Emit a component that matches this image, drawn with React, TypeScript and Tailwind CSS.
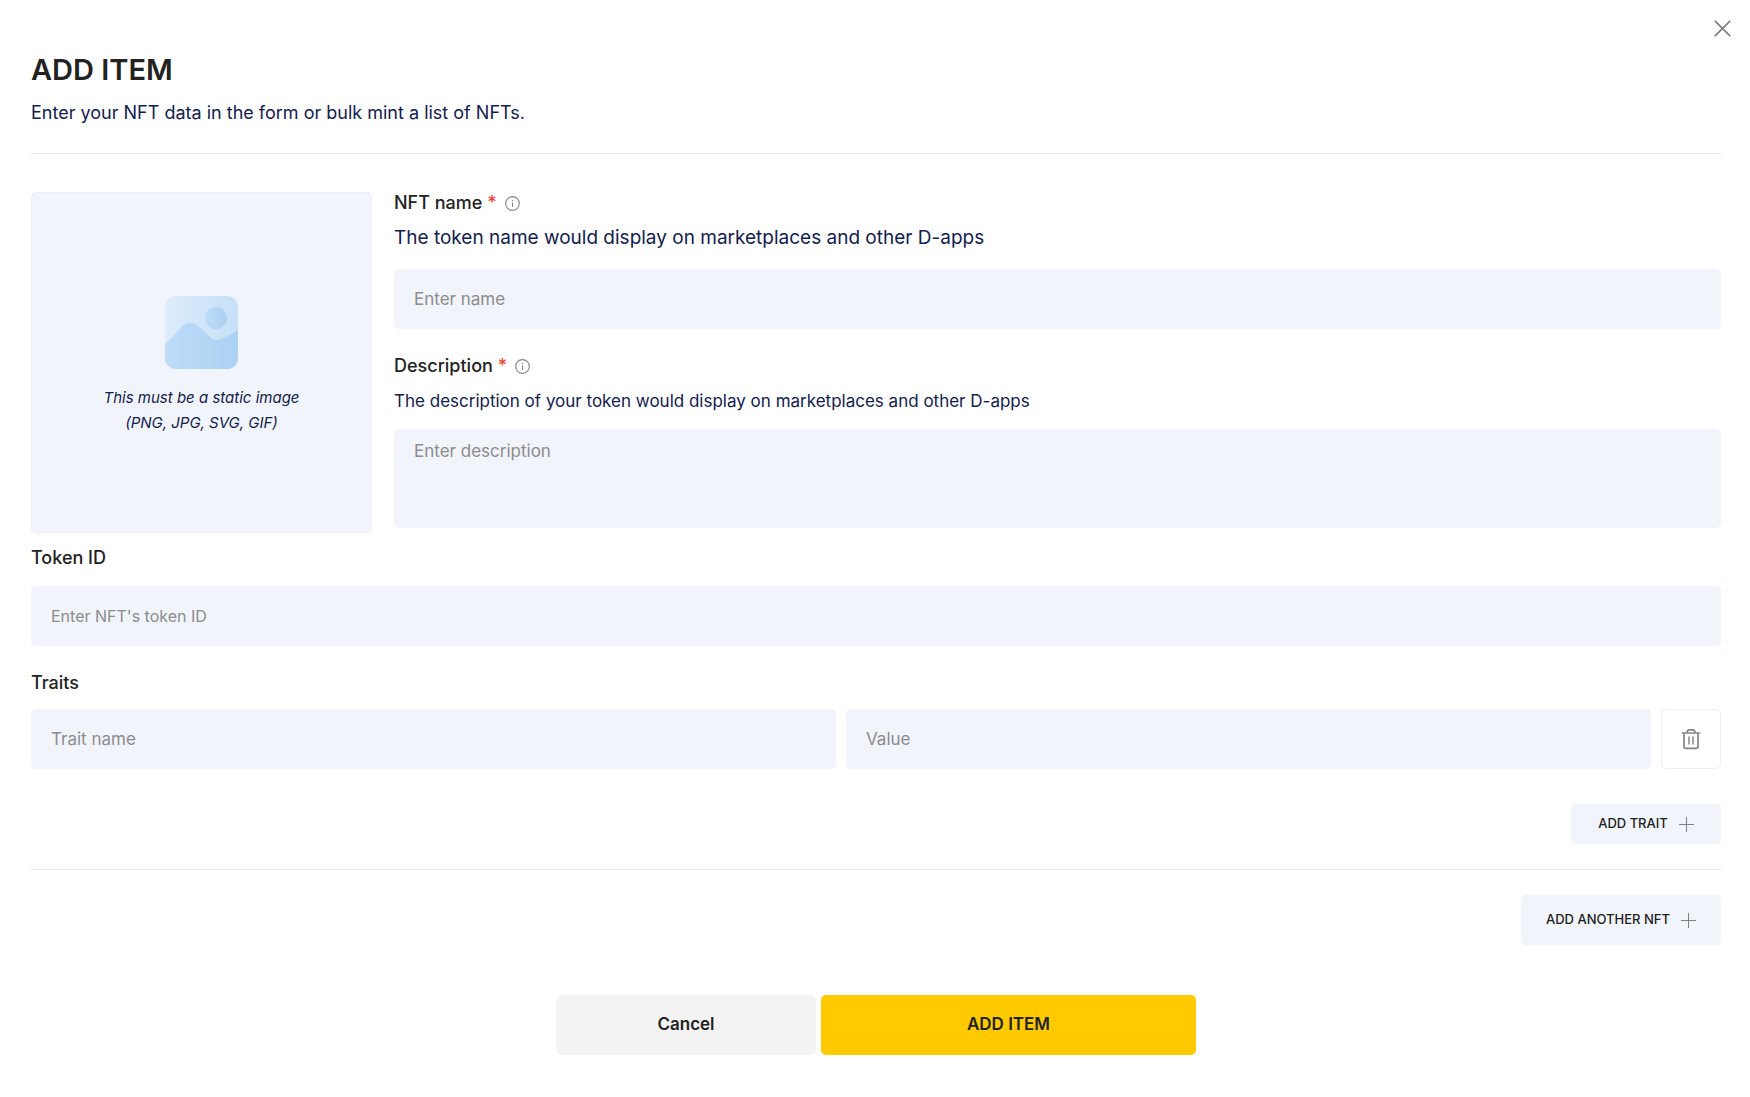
import type { ReactNode } from "react";

const field =
  "block w-full min-w-0 rounded-[5px] bg-[#f1f4fb] px-5 text-[17px] text-[#222] placeholder:text-[#8c8c8c] outline-none focus:ring-1 focus:ring-[#b9cdf0]";
const label = "text-[18px] leading-[22px] font-medium text-[#222]";

function InfoIcon() {
  return (
    <svg viewBox="0 0 16 16" className="ml-2 size-[15px]" fill="none" stroke="#85858c" aria-hidden="true">
      <circle cx="8" cy="8" r="7.3" strokeWidth="1.2" />
      <path d="M8 7v4.7" strokeWidth="1.2" />
      <path d="M8 4.3v1.3" strokeWidth="1.4" />
    </svg>
  );
}

function PlusIcon() {
  return (
    <svg viewBox="0 0 15 15" className="size-[15px]" stroke="#808080" aria-hidden="true">
      <path d="M0 7.5h15M7.5 0v15" />
    </svg>
  );
}

function TrashIcon() {
  return (
    <svg viewBox="0 0 20 22" className="h-[22px] w-5" fill="none" stroke="#858585" aria-hidden="true">
      <path d="M1.4 5h17.2" strokeWidth="1.7" strokeLinecap="round" />
      <path d="M6 4.800C6.200 2.600 6.800 1.800 8.200 1.800h3.600c1.400 0 2 .8 2.200 3" strokeWidth="1.7" />
      <path d="M3 5v13.500c0 1.300.6 1.900 1.900 1.900h10.200c1.300 0 1.900-.6 1.900-1.900V5" strokeWidth="1.7" />
      <path d="M8 8.500v8M12 8.500v8" strokeWidth="1.500" />
    </svg>
  );
}

function PictureIcon() {
  return (
    <svg viewBox="0 0 73 73" className="size-[73px]" aria-hidden="true">
      <defs>
        <linearGradient id="sky" x1="0" x2="1" y1="0" y2="0">
          <stop offset="0" stopColor="#ddecfa" />
          <stop offset="1" stopColor="#c6e0f8" />
        </linearGradient>
        <linearGradient id="hill" x1="0" x2="1" y1="0" y2="0">
          <stop offset="0" stopColor="#bcdcf8" />
          <stop offset="1" stopColor="#add1f2" />
        </linearGradient>
        <clipPath id="frame">
          <rect width="73" height="73" rx="11" />
        </clipPath>
      </defs>
      <g clipPath="url(#frame)">
        <rect width="73" height="73" fill="url(#sky)" />
        <circle cx="51" cy="22" r="11" fill="url(#hill)" />
        <path
          d="M0 49 L15 32.500 Q25 21.500 35.500 31.500 L43 39.500 Q49.500 46 57 42.500 L73 34.500 V73 H0Z"
          fill="url(#hill)"
        />
      </g>
    </svg>
  );
}

function RequiredLabel({ htmlFor, children }: { htmlFor: string; children: ReactNode }) {
  return (
    <div className="flex items-center">
      <label htmlFor={htmlFor} className={label}>
        {children} <span className="text-[#f04438]">*</span>
      </label>
      <InfoIcon />
    </div>
  );
}

export default function App() {
  return (
    <main className="min-h-screen bg-white pb-8 font-['Inter',sans-serif]">
      <div className="flex justify-end pt-5 pr-[19px]">
        <button type="button" aria-label="Close" className="h-[17px]">
          <svg viewBox="0 0 17 17" className="size-[17px]" stroke="#808080" strokeWidth="1.700" aria-hidden="true">
            <path d="M.8.8l15.400 15.400M16.200.8L.8 16.200" />
          </svg>
        </button>
      </div>
      <form className="pt-3 pr-[29px] pl-[31px]" onSubmit={(e) => e.preventDefault()}>
        <header className="border-b border-[#e6e6e6] pb-[26px]">
          <h1 className="text-[29px] leading-[42px] font-semibold text-[#222]">ADD ITEM</h1>
          <p className="mt-2 text-[18px] leading-7 text-[#13204d]">
            Enter your NFT data in the form or bulk mint a list of NFTs.
          </p>
        </header>

        <div className="mt-[38px] flex items-start gap-[22px]">
          <button
            type="button"
            className="flex h-[341px] w-[341px] shrink-0 flex-col items-center rounded-[5px] border border-[#eeeff3] bg-[#f1f4fb] pt-[103px]"
          >
            <PictureIcon />
            <span className="mt-4 text-[15px] leading-[25px] text-[#13204d] italic">
              This must be a static image
              <br />
              (PNG, JPG, SVG, GIF)
            </span>
          </button>
          <div className="min-w-0 flex-1">
            <RequiredLabel htmlFor="name">NFT name</RequiredLabel>
            <p className="mt-[10px] text-[19px] leading-7 text-[#13204d]">
              The token name would display on marketplaces and other D-apps
            </p>
            <input id="name" placeholder="Enter name" className={`${field} mt-[17px] mb-[26px] h-[60px]`} />
            <RequiredLabel htmlFor="description">Description</RequiredLabel>
            <p className="mt-[10px] text-[17px] leading-7 text-[#13204d]">
              The description of your token would display on marketplaces and other D-apps
            </p>
            <textarea
              id="description"
              placeholder="Enter description"
              className={`${field} mt-[14px] h-[99px] resize-none pt-[10px] leading-6`}
            />
          </div>
        </div>

        <label htmlFor="token" className={`${label} mt-[14px] block`}>
          Token ID
        </label>
        <input
          id="token"
          placeholder="Enter NFT's token ID"
          className={`${field} mt-[17px] h-[60px] placeholder:text-[16px]`}
        />

        <fieldset className="mt-[26px]">
          <legend className={label}>Traits</legend>
          <div className="mt-[15px] flex gap-[10px]">
            <input aria-label="Trait name" placeholder="Trait name" className={`${field} h-[60px] flex-1`} />
            <input aria-label="Value" placeholder="Value" className={`${field} h-[60px] flex-1`} />
            <button
              type="button"
              aria-label="Delete trait"
              className="flex size-[60px] shrink-0 items-center justify-center rounded-[5px] border border-[#efefef]"
            >
              <TrashIcon />
            </button>
          </div>
        </fieldset>

        <div className="mt-[35px] flex justify-end border-b border-[#e6e6e6] pb-[25px]">
          <button
            type="button"
            className="flex h-10 w-[150px] items-center justify-center gap-[11px] rounded-[5px] bg-[#f1f4fb] text-[13px] font-medium text-[#222]"
          >
            ADD TRAIT
            <PlusIcon />
          </button>
        </div>
        <div className="mt-[25px] flex justify-end">
          <button
            type="button"
            className="flex h-[50px] w-[200px] items-center justify-center gap-[11px] rounded-[5px] bg-[#f1f4fb] text-[13px] font-medium text-[#222]"
          >
            ADD ANOTHER NFT
            <PlusIcon />
          </button>
        </div>

        <div className="mt-[50px] flex justify-center gap-[5px] text-[17px] font-semibold text-[#222]">
          <button type="button" className="h-[60px] w-[260px] rounded-[6px] bg-[#f3f3f3]">
            Cancel
          </button>
          <button type="submit" className="h-[60px] w-[375px] rounded-[5px] bg-[#ffca00]">
            ADD ITEM
          </button>
        </div>
      </form>
    </main>
  );
}
